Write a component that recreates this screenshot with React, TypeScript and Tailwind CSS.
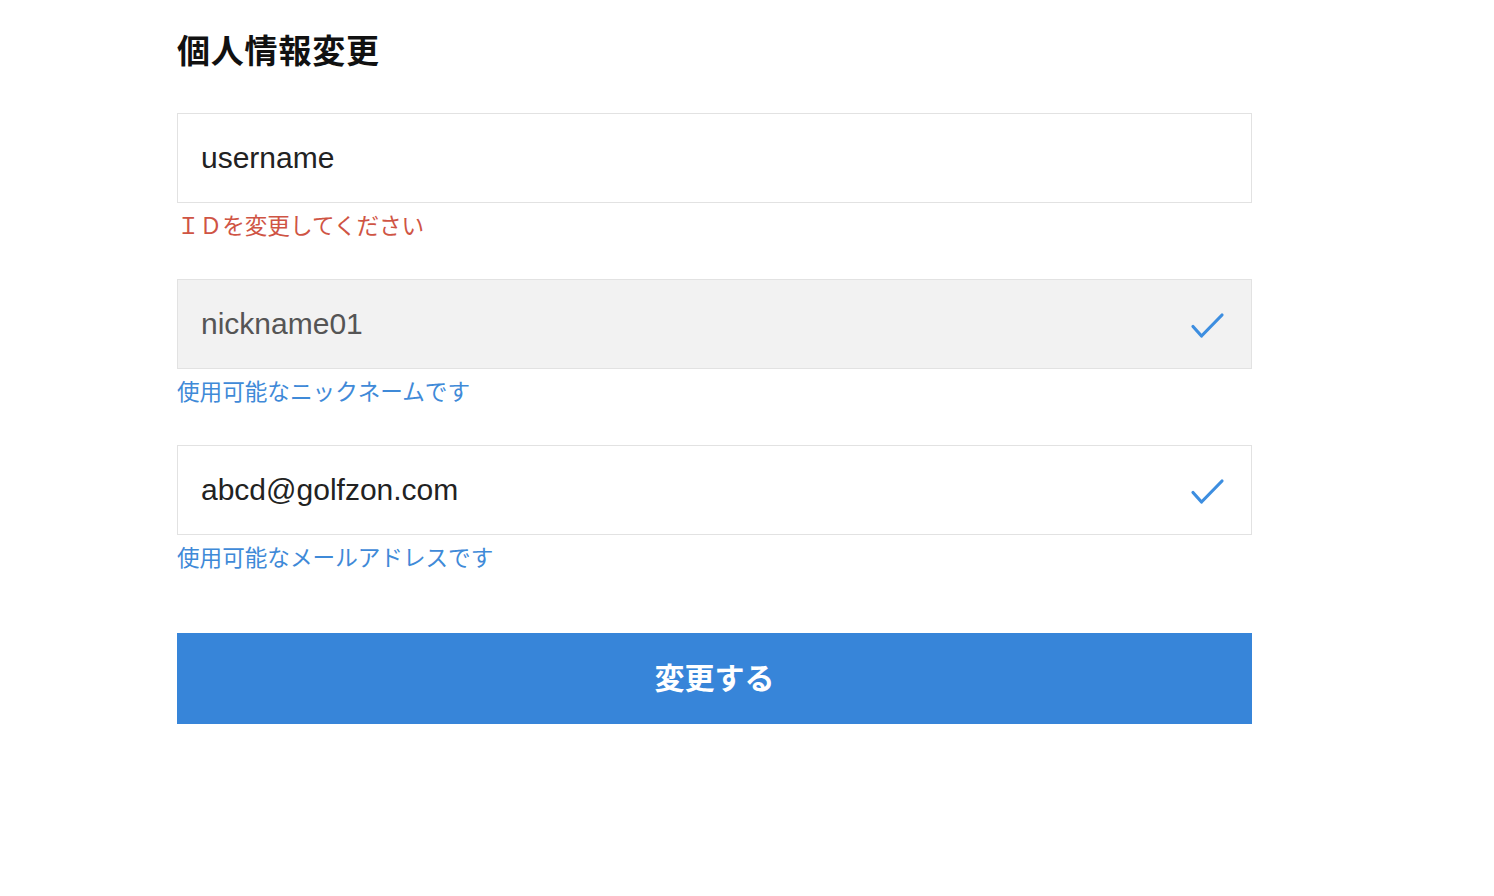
const jp = "font-['Liberation_Sans','Noto_Sans_CJK_JP',sans-serif]";

function Check() {
  return (
    <svg className="w-[36px] h-[30px] mt-[4px] text-[#3d8ee0]" viewBox="0 0 36 30" fill="none">
      <path d="M4 15.5 L12.5 25 L33 4" stroke="currentColor" strokeWidth="3.2" strokeLinecap="round" strokeLinejoin="round" />
    </svg>
  );
}

function Field({
  value,
  note,
  noteClass,
  disabled,
  ok,
}: {
  value: string;
  note: string;
  noteClass: string;
  disabled?: boolean;
  ok?: boolean;
}) {
  return (
    <div className="flex flex-col">
      <div
        className={`h-[90px] flex items-center justify-between pl-[23px] pr-[26px] border border-[#e2e2e2] ${
          disabled ? "bg-[#f2f2f2] text-[#555]" : "bg-white text-[#222]"
        }`}
      >
        <span className="text-[30px] leading-none">{value}</span>
        {ok && <Check />}
      </div>
      <p className={`mt-[10px] text-[22.6px] leading-[28px] ${noteClass}`}>{note}</p>
    </div>
  );
}

export default function App() {
  return (
    <div className={`min-h-screen bg-white ${jp}`}>
      <div className="ml-[177px] w-[1075px] pt-[32px]">
        <h1 className="text-[33px] leading-[40px] font-bold text-[#111] tracking-[0.8px]">個人情報変更</h1>

        <div className="mt-[41px] flex flex-col gap-[38px]">
          <Field value="username" note="ＩＤを変更してください" noteClass="text-[#cf5444]" />
          <Field value="nickname01" note="使用可能なニックネームです" noteClass="text-[#3f8ad8]" disabled ok />
          <Field value="abcd@golfzon.com" note="使用可能なメールアドレスです" noteClass="text-[#3f8ad8]" ok />
        </div>

        <button className="mt-[60px] w-full h-[91px] bg-[#3785d9] text-white text-[30px] font-bold">
          変更する
        </button>
      </div>
    </div>
  );
}
